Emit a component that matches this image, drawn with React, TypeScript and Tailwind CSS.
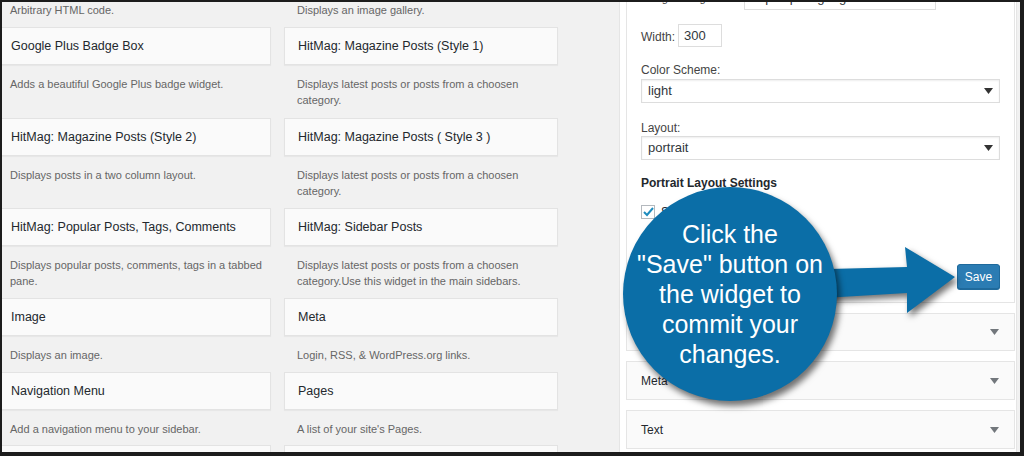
import React from 'react';

type Widget = { title: string; desc: string[] };

const rows: [Widget, Widget][] = [
  [
    { title: 'Google Plus Badge Box', desc: ['Adds a beautiful Google Plus badge widget.'] },
    { title: 'HitMag: Magazine Posts (Style 1)', desc: ['Displays latest posts or posts from a choosen', 'category.'] },
  ],
  [
    { title: 'HitMag: Magazine Posts (Style 2)', desc: ['Displays posts in a two column layout.'] },
    { title: 'HitMag: Magazine Posts ( Style 3 )', desc: ['Displays latest posts or posts from a choosen', 'category.'] },
  ],
  [
    { title: 'HitMag: Popular Posts, Tags, Comments', desc: ['Displays popular posts, comments, tags in a tabbed', 'pane.'] },
    { title: 'HitMag: Sidebar Posts', desc: ['Displays latest posts or posts from a choosen', 'category.Use this widget in the main sidebars.'] },
  ],
  [
    { title: 'Image', desc: ['Displays an image.'] },
    { title: 'Meta', desc: ['Login, RSS, & WordPress.org links.'] },
  ],
  [
    { title: 'Navigation Menu', desc: ['Add a navigation menu to your sidebar.'] },
    { title: 'Pages', desc: ["A list of your site's Pages."] },
  ],
];

const font = { fontFamily: '"Liberation Sans", Arial, sans-serif' };

const Caret = ({ color }: { color: string }) => (
  <svg width="9" height="6" viewBox="0 0 9 6">
    <path d="M0 0 L9 0 L4.5 6 Z" fill={color} />
  </svg>
);

const WidgetItem = ({ w, last }: { w: Widget; last?: boolean }) => (
  <div className="flex flex-col">
    <div className="h-[38px] shrink-0 bg-[#fafafa] border border-[#e3e3e3] shadow-[0_1px_1px_rgba(0,0,0,0.04)] flex items-center px-[13px] text-[12.5px] text-[#23282d] whitespace-nowrap">
      {w.title}
    </div>
    <div className={`pt-[11px] ${last ? 'pb-[8px]' : 'pb-[9px]'} px-[13px] text-[11px] leading-[16px] text-[#666]`}>
      {w.desc.map((l, i) => (
        <div key={i} className="whitespace-nowrap">{l}</div>
      ))}
    </div>
  </div>
);

const Select = ({ value }: { value: string }) => (
  <div className="h-[24px] w-[359px] shrink-0 border border-[#ddd] bg-white shadow-[inset_0_1px_2px_rgba(0,0,0,0.07)] flex items-center justify-between pl-[6px] pr-[6px] text-[13px] text-[#32373c]">
    <span>{value}</span>
    <Caret color="#333" />
  </div>
);

const Collapsed = ({ title, h }: { title: string; h: string }) => (
  <div className={`${h} shrink-0 mt-[10px] bg-[#fafafa] border border-[#e5e5e5] flex items-center justify-between pl-[14px] pr-[15px] text-[12px] text-[#23282d]`}>
    <span>{title}</span>
    <Caret color="#72777c" />
  </div>
);

export default function App() {
  return (
    <div
      className="relative w-[1024px] h-[456px] overflow-hidden bg-[#f1f1f1] border-t-2 border-l-2 border-b-4 border-r-4 border-[#1c1c1c] flex"
      style={font}
    >
      {/* available widgets */}
      <div className="ml-[-5px] w-[561px] shrink-0 flex flex-col">
        <div className="shrink-0 grid grid-cols-[274px_274px] gap-x-[13px] h-[25px] text-[11px] leading-[16px] text-[#666]">
          <div className="px-[13px]">Arbitrary HTML code.</div>
          <div className="px-[13px]">Displays an image gallery.</div>
        </div>
        {rows.map((r, i) => (
          <div key={i} className={`shrink-0 grid grid-cols-[274px_274px] gap-x-[13px] ${i === 0 ? 'pb-[1px]' : ''}`}>
            <WidgetItem w={r[0]} last={i === 4} />
            <WidgetItem w={r[1]} last={i === 4} />
          </div>
        ))}
        <div className="shrink-0 grid grid-cols-[274px_274px] gap-x-[13px]">
          <div className="h-[38px] bg-[#fafafa] border border-[#e3e3e3]" />
          <div className="h-[38px] bg-[#fafafa] border border-[#e3e3e3]" />
        </div>
      </div>

      <div className="w-[61px] shrink-0" />

      {/* sidebar holder */}
      <div className="w-[398px] shrink-0 bg-white border-x border-[#e5e5e5] pl-[6px] pr-[1px] flex flex-col">
        <div className="shrink-0 mt-[-20px] border border-[#e5e5e5] bg-white pt-[3px] pb-[13px] px-[14px] flex flex-col text-[12px] text-[#444]">
          <div className="h-[24px] shrink-0 flex items-center gap-[4px]">
            <span className="text-[11px] whitespace-nowrap">Google+ Page URL:</span>
            <div className="h-[24px] w-[192px] border border-[#ddd] flex items-center px-[6px] text-[13px] text-[#32373c] whitespace-nowrap overflow-hidden">
              https://plus.google.com/+GreenG
            </div>
          </div>
          <div className="mt-[14px] h-[23px] shrink-0 flex items-center gap-[3px]">
            <span className="pt-[3px]">Width:</span>
            <div className="h-[23px] w-[44px] border border-[#ddd] flex items-center px-[5px] text-[13px] text-[#32373c]">300</div>
          </div>
          <div className="mt-[15px] leading-[16px]">Color Scheme:</div>
          <div className="mt-[1px]">
            <Select value="light" />
          </div>
          <div className="mt-[17px] leading-[16px]">Layout:</div>
          <Select value="portrait" />
          <div className="mt-[15px] leading-[16px] font-semibold text-[#23282d]">Portrait Layout Settings</div>
          <div className="mt-[14px] h-[14px] shrink-0 flex items-center gap-[6px]">
            <div className="w-[14px] h-[14px] border border-[#b4b9be] bg-white flex items-center justify-center">
              <svg width="11" height="10" viewBox="0 0 11 10">
                <path d="M1 5 L4 8 L10 1" stroke="#1e8cbe" strokeWidth="2" fill="none" />
              </svg>
            </div>
            <span className="text-[#23282d]">Show Cover Photo</span>
          </div>
          <div className="mt-[45px] flex justify-end">
            <button className="h-[25px] w-[43px] rounded-[3px] bg-[#2b7cb3] border border-[#1f6a9c] shadow-[0_1px_0_#1f6a9c] text-white text-[12px]">
              Save
            </button>
          </div>
        </div>
        <Collapsed title="Links" h="h-[38px]" />
        <Collapsed title="Meta" h="h-[39px]" />
        <Collapsed title="Text" h="h-[39px]" />
      </div>

      {/* callout */}
      <svg
        className="absolute left-[-2px] top-[-2px] drop-shadow-[3px_4px_3px_rgba(0,0,0,0.55)]"
        width="1024"
        height="456"
        viewBox="0 0 1024 456"
      >
        <polygon points="790,270 907,267 905,247 955,277 907,313 907,293 790,300" fill="#0b6ea7" />
      </svg>
      <div className="absolute left-[621px] top-[185px] w-[214px] h-[214px] rounded-full bg-[#0b6ea7] shadow-[3px_5px_6px_rgba(0,0,0,0.55)] flex flex-col items-center justify-center text-white text-[25px] leading-[30px] text-center">
        <div>Click the</div>
        <div className="whitespace-nowrap">"Save" button on</div>
        <div>the widget to</div>
        <div>commit your</div>
        <div>changes.</div>
      </div>
    </div>
  );
}
